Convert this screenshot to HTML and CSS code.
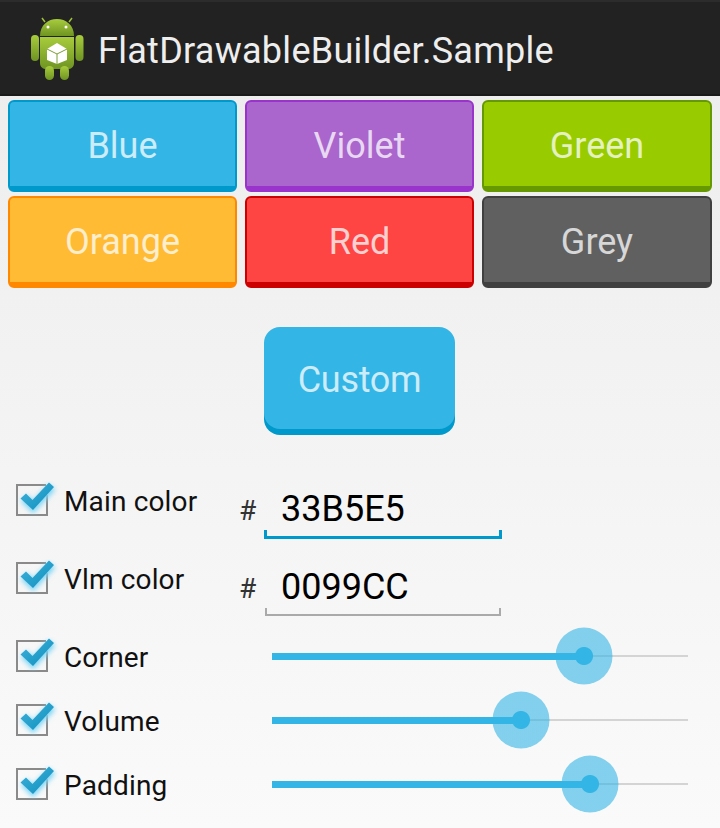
FILE: index.html
```html
<!DOCTYPE html>
<html lang="en">
<head>
    <meta charset="UTF-8">
    <meta name="viewport" content="width=device-width, initial-scale=1.0">
    <title>FlatDrawableBuilder.Sample</title>
    <link rel="stylesheet" href="styles.css">
</head>
<body>
    <svg class="defs" width="0" height="0">
        <defs>
            <linearGradient id="droid" x1="0" y1="0" x2="0" y2="1">
                <stop offset="0" stop-color="#a8cc3c"/>
                <stop offset="1" stop-color="#6f9422"/>
            </linearGradient>
            <linearGradient id="tick" x1="0" y1="0" x2="1" y2="1">
                <stop offset="0" stop-color="#3fb4dc"/>
                <stop offset="1" stop-color="#0f8cbc"/>
            </linearGradient>
            <filter id="glow" x="-40%" y="-40%" width="180%" height="180%">
                <feGaussianBlur stdDeviation="2.5"/>
            </filter>
            <symbol id="check" viewBox="0 0 44 40">
                <path d="M31 4H2V34H32V14" fill="none" stroke="#8a8a8a" stroke-width="2"/>
                <path d="M9 17L18 26L37 6" fill="none" stroke="#7fd6f5" stroke-width="9" filter="url(#glow)"/>
                <path d="M5.500 17.500L11 12.500L17.500 19L34 1.500L39 6L18 29Z" fill="url(#tick)"/>
            </symbol>
        </defs>
    </svg>

    <header class="action-bar">
        <svg class="logo" width="54" height="64" viewBox="0 0 54 64">
            <path d="M15 6L12 2M39 6L42 2" stroke="#9dbf3a" stroke-width="1.500" fill="none"/>
            <path d="M10 20C10 9 18 3 27 3S44 9 44 20Z" fill="url(#droid)"/>
            <circle cx="18" cy="11" r="1.500" fill="#fff"/>
            <circle cx="36" cy="11" r="1.500" fill="#fff"/>
            <rect x="1" y="19" width="8" height="26" rx="4" fill="url(#droid)"/>
            <rect x="45.500" y="19" width="8" height="26" rx="4" fill="url(#droid)"/>
            <path d="M10 21H44V47C44 51 41 53 38 53H16C13 53 10 51 10 47Z" fill="url(#droid)"/>
            <rect x="15" y="50" width="9" height="14" rx="4.500" fill="url(#droid)"/>
            <rect x="30" y="50" width="9" height="14" rx="4.500" fill="url(#droid)"/>
            <path d="M27 27L37 33V44L27 48L17 44V33Z" fill="#fff"/>
            <path d="M17 33L27 38L37 33M27 38V48" fill="none" stroke="#7d9c35" stroke-width="1"/>
        </svg>
        <h1 class="title">FlatDrawableBuilder.Sample</h1>
    </header>

    <main class="content">
        <div class="swatches">
            <button class="flat blue">Blue</button>
            <button class="flat violet">Violet</button>
            <button class="flat green">Green</button>
            <button class="flat orange">Orange</button>
            <button class="flat red">Red</button>
            <button class="flat grey">Grey</button>
        </div>

        <div class="custom-wrap">
            <button class="custom">Custom</button>
        </div>

        <div class="row color-row">
            <div class="check-label">
                <svg class="check"><use href="#check"/></svg>
                <span>Main color</span>
            </div>
            <span class="hash">#</span>
            <div class="field active">33B5E5</div>
        </div>
        <div class="row color-row">
            <div class="check-label">
                <svg class="check"><use href="#check"/></svg>
                <span>Vlm color</span>
            </div>
            <span class="hash">#</span>
            <div class="field">0099CC</div>
        </div>

        <div class="row slider-row first">
            <div class="check-label">
                <svg class="check"><use href="#check"/></svg>
                <span>Corner</span>
            </div>
            <div class="slider">
                <div class="fill" style="width: 75%"></div>
                <div class="thumb" style="left: 75%"></div>
            </div>
        </div>
        <div class="row slider-row">
            <div class="check-label">
                <svg class="check"><use href="#check"/></svg>
                <span>Volume</span>
            </div>
            <div class="slider">
                <div class="fill" style="width: 59.8%"></div>
                <div class="thumb" style="left: 59.8%"></div>
            </div>
        </div>
        <div class="row slider-row">
            <div class="check-label">
                <svg class="check"><use href="#check"/></svg>
                <span>Padding</span>
            </div>
            <div class="slider">
                <div class="fill" style="width: 76.4%"></div>
                <div class="thumb" style="left: 76.4%"></div>
            </div>
        </div>
    </main>
</body>
</html>
```

FILE: styles.css
```css
*{
    margin: 0;
    padding: 0;
    box-sizing: border-box;
}
html, body{
    height: 100%;
}
body{
    display: flex;
    flex-direction: column;
    font-family: Roboto, "Liberation Sans", sans-serif;
    overflow: hidden;
    background: linear-gradient(#ececec, #fafafa);
}
.defs{
    position: absolute;
}
.action-bar{
    display: flex;
    align-items: center;
    height: 96px;
    padding-left: 30px;
    background-color: #222;
    border-top: 2px solid #2c2c2c;
    border-bottom: 2px solid #1a1a1a;
}
.logo{
    margin-right: 14px;
}
.title{
    padding-top: 5px;
    font-size: 36px;
    font-weight: 400;
    letter-spacing: 0.28px;
    color: #eee;
}
.content{
    flex: 1;
    padding-top: 4px;
}
.swatches{
    display: grid;
    grid-template-columns: 229px 229px 230px;
    grid-auto-rows: 92px;
    gap: 4px 8px;
    padding: 0 8px;
}
.flat{
    padding-top: 4px;
    font-family: inherit;
    font-size: 36px;
    color: rgba(255, 255, 255, 0.75);
    border-style: solid;
    border-width: 2px 2px 6px;
    border-radius: 6px;
}
.blue{
    background-color: #33b5e5;
    border-color: #0099cc;
}
.violet{
    background-color: #aa66cc;
    border-color: #9933cc;
}
.green{
    background-color: #99cc00;
    border-color: #669900;
}
.orange{
    background-color: #ffbb33;
    border-color: #ff8800;
}
.red{
    background-color: #ff4444;
    border-color: #cc0000;
}
.grey{
    background-color: #606060;
    border-color: #404040;
}
.custom-wrap{
    display: flex;
    justify-content: center;
    padding: 39px 10px 26px 0;
    margin-left: 9px;
}
.custom{
    width: 191px;
    height: 102px;
    margin-bottom: 6px;
    padding-top: 4px;
    font-family: inherit;
    font-size: 36px;
    letter-spacing: -0.3px;
    color: rgba(255, 255, 255, 0.75);
    background-color: #33b5e5;
    border: none;
    border-radius: 16px;
    box-shadow: 0 6px 0 #0099cc;
}
.row{
    display: flex;
    align-items: center;
}
.color-row{
    height: 78px;
}
.slider-row{
    height: 64px;
}
.slider-row.first{
    margin-top: 7px;
}
.check-label{
    display: flex;
    align-items: center;
    width: 238px;
    padding-top: 2px;
    padding-left: 15px;
    font-size: 28px;
    letter-spacing: 0.15px;
    color: #111;
}
.slider-row .check-label{
    width: 272px;
}
.check{
    width: 44px;
    height: 40px;
    margin-right: 5px;
    flex-shrink: 0;
}
.hash{
    width: 26px;
    margin-top: 20px;
    padding-left: 1px;
    font-size: 28px;
    color: #333;
}
.field{
    width: 238px;
    height: 48px;
    margin-top: 30px;
    padding-left: 17px;
    font-size: 36px;
    line-height: 36px;
    color: #000;
    background:
        linear-gradient(#aaa, #aaa) left 1px bottom 1px / 2px 8px no-repeat,
        linear-gradient(#aaa, #aaa) right 1px bottom 1px / 2px 8px no-repeat,
        linear-gradient(#aaa, #aaa) left 1px bottom 1px / 236px 2px no-repeat;
}
.field.active{
    background:
        linear-gradient(#0099cc, #0099cc) left bottom / 3px 9px no-repeat,
        linear-gradient(#0099cc, #0099cc) right bottom / 3px 9px no-repeat,
        linear-gradient(#0099cc, #0099cc) left bottom / 100% 3px no-repeat;
}
.slider{
    position: relative;
    width: 416px;
    height: 2px;
    background-color: #d4d4d4;
}
.fill{
    position: absolute;
    left: 0;
    top: -2px;
    height: 7px;
    background-color: #33b5e5;
}
.thumb{
    position: absolute;
    top: 1px;
    width: 57px;
    height: 57px;
    border-radius: 50%;
    background: radial-gradient(circle, #33b5e5 8.500px, rgba(51, 181, 229, 0.6) 9.500px);
    transform: translate(-50%, -50%);
}
```
